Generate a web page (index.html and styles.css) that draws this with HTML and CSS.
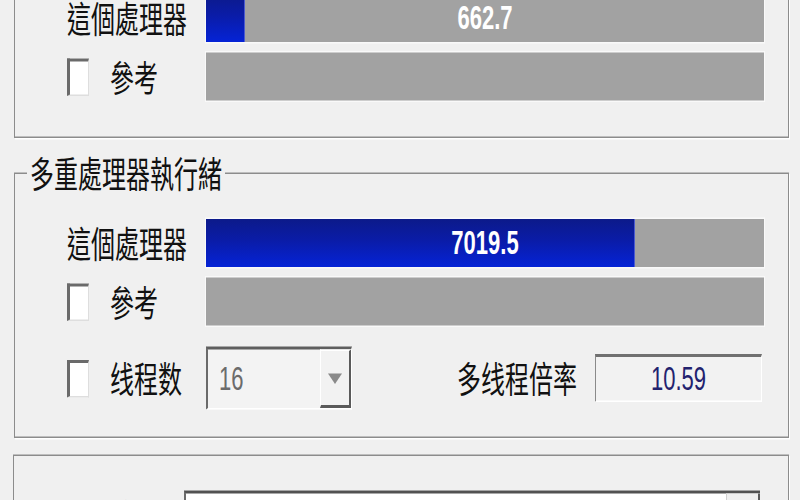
FILE: index.html
```html
<!DOCTYPE html>
<html lang="zh-Hant">
<head>
<meta charset="utf-8">
<title>CPU-Z 效能測試</title>
<link rel="stylesheet" href="styles.css">
</head>
<body>
<div class="screen">
  <fieldset class="group group-single">
    <legend class="group-title">單一處理器執行緒</legend>
    <div class="rows rows-single">
      <div class="row">
        <span class="label">這個處理器</span>
        <div class="bar"><div class="fill" style="width:7.0%"></div><span class="value">662.7</span></div>
      </div>
      <div class="row">
        <div class="check"><span class="box"></span><span class="label">參考</span></div>
        <div class="bar"></div>
      </div>
    </div>
  </fieldset>

  <fieldset class="group group-multi">
    <legend class="group-title">多重處理器執行緒</legend>
    <div class="rows rows-multi">
      <div class="row">
        <span class="label">這個處理器</span>
        <div class="bar"><div class="fill" style="width:76.9%"></div><span class="value">7019.5</span></div>
      </div>
      <div class="row">
        <div class="check"><span class="box"></span><span class="label">參考</span></div>
        <div class="bar"></div>
      </div>
      <div class="row row-options">
        <div class="check"><span class="box"></span><span class="label">线程数</span></div>
        <div class="options">
          <div class="combo">
            <span class="combo-text">16</span>
            <span class="combo-btn"><span class="arrow"></span></span>
          </div>
          <span class="label ratio-label">多线程倍率</span>
          <div class="ratio">10.59</div>
        </div>
      </div>
    </div>
  </fieldset>

  <div class="panel">
    <div class="panel-row">
      <span class="label panel-label">參考</span>
      <div class="select"><span class="select-text"></span><span class="select-btn"></span></div>
    </div>
  </div>
</div>
</body>
</html>
```

FILE: styles.css
```css
html, body {
  margin: 0;
  padding: 0;
  background: #f0f0f0;
  overflow: hidden;
  width: 800px;
  height: 500px;
}

.screen {
  width: 800px;
  transform: scaleY(1.5);
  transform-origin: 0 0;
}

.label {
  font-family: "Noto Sans CJK TC", "Noto Sans CJK SC", sans-serif;
  font-size: 24px;
  line-height: 26px;
  color: #111111;
  white-space: nowrap;
}

.group {
  margin: 0 11px 0 14px;
  padding: 0;
  min-width: 0;
  border: 1px solid #8c8c8c;
  box-shadow: 1px 1px 0 #ffffff;
}

.group-single {
  margin-top: -72px;
}

.group-multi {
  margin-top: 10px;
}

.group-title {
  margin-left: 12px;
  padding: 0 3px;
  font-family: "Noto Sans CJK TC", "Noto Sans CJK SC", sans-serif;
  font-size: 24px;
  line-height: 26px;
  color: #111111;
}

.rows {
  display: flex;
  flex-direction: column;
  gap: 7px;
  padding: 18px 24px 24px 52px;
}

.rows-multi {
  padding-bottom: 18px;
}

.row {
  display: grid;
  grid-template-columns: 139px 1fr;
  align-items: center;
}

.row-options {
  margin-top: 7px;
}

.bar {
  display: grid;
  height: 32px;
  background: #a2a2a2;
  box-shadow: 0 0 0 1px #f9f9f9;
}

.fill {
  grid-area: 1 / 1;
  height: 100%;
  background: linear-gradient(to bottom, #0c1a8a 0%, #0a1ca8 45%, #0523d6 100%);
  box-shadow: inset -1px 0 0 #4a5ad0;
}

.value {
  grid-area: 1 / 1;
  justify-self: center;
  align-self: center;
  color: #ffffff;
  font-family: "Liberation Sans", Arial, sans-serif;
  font-weight: bold;
  font-size: 22px;
  line-height: 1;
}

.check {
  display: flex;
  align-items: center;
  gap: 21px;
}

.box {
  width: 22px;
  height: 25px;
  box-sizing: border-box;
  background: #ffffff;
  border-top: 2px solid #6a6a6a;
  border-left: 3px solid #6a6a6a;
  border-right: 1px solid #dedede;
  border-bottom: 1px solid #dedede;
}

.options {
  display: flex;
  align-items: center;
}

.combo {
  width: 146px;
  height: 42px;
  box-sizing: border-box;
  display: flex;
  background: #f3f3f3;
  border-top: 2px solid #5e5e5e;
  border-left: 2px solid #6a6a6a;
  border-right: 1px solid #ffffff;
  border-bottom: 1px solid #ffffff;
}

.combo-text {
  flex: 1;
  display: flex;
  align-items: center;
  padding-left: 11px;
  font-family: "Liberation Sans", Arial, sans-serif;
  font-size: 22px;
  color: #6b6b6b;
}

.combo-btn {
  width: 31px;
  box-sizing: border-box;
  display: flex;
  align-items: center;
  justify-content: center;
  background: #f2f2f2;
  border-top: 1px solid #ffffff;
  border-left: 1px solid #ffffff;
  border-right: 2px solid #5a5a5a;
  border-bottom: 2px solid #5a5a5a;
}

.arrow {
  width: 0;
  height: 0;
  border-left: 7px solid transparent;
  border-right: 7px solid transparent;
  border-top: 7px solid #8a8a8a;
}

.ratio-label {
  margin-left: auto;
  margin-right: 18px;
}

.ratio {
  width: 167px;
  height: 32px;
  margin-right: 2px;
  box-sizing: border-box;
  display: flex;
  align-items: center;
  justify-content: center;
  background: #f2f2f2;
  border-top: 2px solid #707070;
  border-left: 1px solid #8a8a8a;
  border-right: 1px solid #ffffff;
  border-bottom: 1px solid #ffffff;
  font-family: "Liberation Sans", Arial, sans-serif;
  font-size: 22px;
  color: #22226e;
}

.panel {
  margin: 11px 11px 0 13px;
  padding: 23px 0 30px 0;
  border: 1px solid #8c8c8c;
  box-shadow: 1px 1px 0 #ffffff;
}

.panel-row {
  display: flex;
  align-items: flex-start;
  gap: 20px;
}

.panel-label {
  width: 150px;
  text-align: right;
  margin-top: 4px;
}

.select {
  width: 576px;
  height: 30px;
  box-sizing: border-box;
  display: flex;
  background: #ffffff;
  border-top: 2px solid #525252;
  border-left: 2px solid #6a6a6a;
}

.select-text {
  flex: 1;
}

.select-btn {
  width: 31px;
  background: #f0f0f0;
  border-left: 1px solid #d0d0d0;
  border-right: 2px solid #5a5a5a;
}
```
